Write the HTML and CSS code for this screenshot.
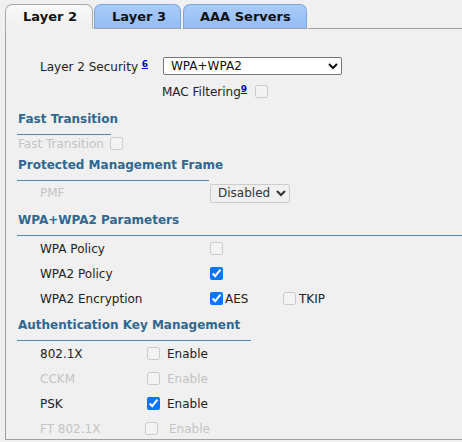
FILE: index.html
```html
<!DOCTYPE html>
<html>
<head>
<meta charset="utf-8">
<link rel="stylesheet" href="styles.css">
</head>
<body>
<div class="tabs">
  <div class="tab active">Layer 2</div>
  <div class="tab">Layer 3</div>
  <div class="tab">AAA Servers</div>
  <div class="tab-fill"></div>
</div>
<div class="panel">
  <div class="row sec-row">
    <span class="label">Layer 2 Security <a class="sup" href="#">6</a></span>
    <select class="sel-main"><option>WPA+WPA2</option></select>
  </div>
  <div class="row mac-row">
    <span class="text">MAC Filtering<a class="sup" href="#">9</a></span>
    <input type="checkbox" class="cb mac-cb" disabled>
  </div>

  <div class="header h-ft">Fast Transition</div>
  <div class="row ft-row">
    <span class="text dis">Fast Transition</span>
    <input type="checkbox" class="cb ft-cb" disabled>
  </div>

  <div class="header h-pmf">Protected Management Frame</div>
  <div class="row pmf-row">
    <span class="label dis pmf-label">PMF</span>
    <select class="sel-pmf"><option>Disabled</option></select>
  </div>

  <div class="header h-wpa">WPA+WPA2 Parameters</div>
  <div class="row wpa">
    <span class="label wpa-label">WPA Policy</span>
    <input type="checkbox" class="cb" disabled>
  </div>
  <div class="row wpa">
    <span class="label wpa-label">WPA2 Policy</span>
    <input type="checkbox" class="cb" checked>
  </div>
  <div class="row wpa">
    <span class="label wpa-label">WPA2 Encryption</span>
    <input type="checkbox" class="cb" checked><span class="opt aes">AES</span>
    <input type="checkbox" class="cb tkip-cb" disabled><span class="opt">TKIP</span>
  </div>

  <div class="header h-akm">Authentication Key Management</div>
  <div class="row akm">
    <span class="label akm-label">802.1X</span>
    <input type="checkbox" class="cb" disabled><span class="en">Enable</span>
  </div>
  <div class="row akm">
    <span class="label akm-label dis">CCKM</span>
    <input type="checkbox" class="cb" disabled><span class="en dis">Enable</span>
  </div>
  <div class="row akm">
    <span class="label akm-label">PSK</span>
    <input type="checkbox" class="cb" checked><span class="en">Enable</span>
  </div>
  <div class="row akm">
    <span class="label akm-label ft8021x dis">FT 802.1X</span>
    <input type="checkbox" class="cb" disabled><span class="en en-ft dis">Enable</span>
  </div>
</div>
</body>
</html>
```

FILE: styles.css
```css
html, body {
  margin: 0;
  padding: 0;
  background: #f0f0f0;
}
body {
  width: 462px;
  height: 442px;
  overflow: hidden;
  font-family: "DejaVu Sans", Verdana, sans-serif;
  font-size: 12px;
  color: #222;
}
.tabs {
  display: flex;
  align-items: flex-end;
  padding: 4px 0 0 5px;
  height: 25px;
  box-sizing: content-box;
}
.tab {
  box-sizing: border-box;
  height: 25px;
  padding: 0 16px;
  font-weight: bold;
  font-size: 13px;
  line-height: 23px;
  color: #111;
  border: 1px solid #7ca6e2;
  border-bottom: 1px solid #a0a0a0;
  border-radius: 7px 7px 0 0;
  background: linear-gradient(#a9cbf9, #95bdf5);
  margin-right: 1px;
  white-space: nowrap;
}
.tab.active {
  width: 88px;
  padding-left: 17px;
  border-color: #aaaaaa;
  border-bottom-color: #f0f0f0;
  background: linear-gradient(#f8f8f8, #f0f0f0);
}
.tab:nth-child(2) { width: 87px; padding-left: 17px; margin-right: 2px; }
.tab:nth-child(3) { width: 124px; padding-left: 16px; }
.tab-fill {
  flex: 1;
  height: 25px;
  border-bottom: 1px solid #a0a0a0;
  box-sizing: border-box;
}
.panel {
  margin-left: 5px;
  border-left: 1px solid #a0a0a0;
  border-bottom: 1px solid #a0a0a0;
  height: 411px;
  box-sizing: border-box;
  padding-top: 25px;
  overflow: hidden;
}
.row {
  display: flex;
  align-items: center;
  white-space: nowrap;
}
.label {
  display: inline-block;
  padding-left: 34px;
}
.sup {
  color: #0000cc;
  font-weight: bold;
  font-size: 9px;
  vertical-align: 4px;
  text-decoration: underline;
}
.dis { color: #c4c4c4; }
.sec-row { height: 24px; }
.sec-row .label { width: 157px; box-sizing: border-box; }
.sel-main {
  width: 179px;
  height: 18px;
  font-family: "DejaVu Sans", sans-serif;
  font-size: 12px;
  padding: 0 0 0 3px;
  border: 1px solid #767676;
  border-radius: 2px;
  background: #fff;
  color: #111;
}
.mac-row { height: 26px; padding-left: 156px; }
.mac-row .text { margin-right: 8px; }
.cb {
  width: 13px;
  height: 13px;
  margin: 0;
  flex: none;
}
.header {
  font-weight: bold;
  color: #2f6790;
  line-height: 16px;
  padding-bottom: 7px;
  border-bottom: 1px solid #4f87ad;
  margin-left: 11px;
  padding-left: 1px;
  white-space: nowrap;
  box-sizing: border-box;
}
.h-ft { margin-top: 7px; width: 94px; }
.ft-row { height: 17px; padding-left: 12px; }
.ft-row .text { margin-right: 6px; }
.h-pmf { margin-top: 5px; width: 192px; }
.pmf-row { height: 24px; }
.pmf-label { width: 204px; box-sizing: border-box; }
.sel-pmf {
  width: 80px;
  height: 19px;
  font-family: "DejaVu Sans", sans-serif;
  font-size: 12px;
  padding: 0 0 0 3px;
  border: 1px solid #cccccc;
  border-radius: 2px;
  background: #f0f0f0;
  color: #333;
}
.h-wpa { margin-top: 7px; }
.wpa { height: 25px; }
.wpa-label { width: 204px; box-sizing: border-box; }
.opt { margin-left: 2px; }
.aes { width: 58px; }
.tkip-cb { margin-right: 1px; }
.h-akm { margin-top: 6px; width: 234px; }
.akm { height: 25px; }
.akm-label { width: 141px; box-sizing: border-box; }
.en { margin-left: 7px; }
.ft8021x { width: 139px; }
.en-ft { margin-left: 11px; }
```
